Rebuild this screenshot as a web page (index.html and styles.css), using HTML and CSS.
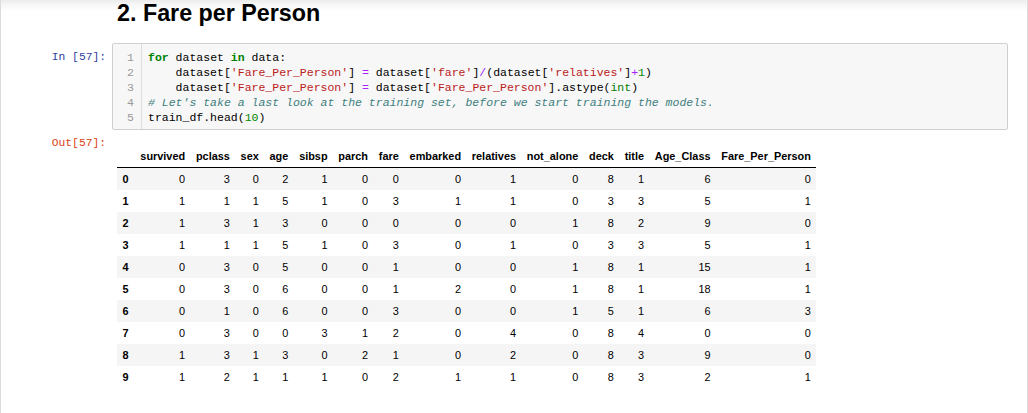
FILE: index.html
```html
<!DOCTYPE html>
<html>
<head>
<meta charset="utf-8">
<link rel="stylesheet" href="styles.css">
</head>
<body>
<div class="page">
  <div class="cell text-cell">
    <div class="prompt"></div>
    <div class="content"><h2 class="heading">2. Fare per Person</h2></div>
  </div>

  <div class="cell input-cell">
    <div class="prompt in-prompt">In [57]:</div>
    <div class="content">
      <div class="code-box">
        <div class="gutter">
          <div>1</div><div>2</div><div>3</div><div>4</div><div>5</div>
        </div>
        <div class="code">
          <div class="line"><span class="kw">for</span> dataset <span class="kw">in</span> data:</div>
          <div class="line">    dataset[<span class="str">'Fare_Per_Person'</span>] <span class="op">=</span> dataset[<span class="str">'fare'</span>]<span class="op">/</span>(dataset[<span class="str">'relatives'</span>]<span class="op">+</span><span class="num">1</span>)</div>
          <div class="line">    dataset[<span class="str">'Fare_Per_Person'</span>] <span class="op">=</span> dataset[<span class="str">'Fare_Per_Person'</span>].astype(<span class="bi">int</span>)</div>
          <div class="line"><span class="cm"># Let's take a last look at the training set, before we start training the models.</span></div>
          <div class="line">train_df.head(<span class="num">10</span>)</div>
        </div>
      </div>
    </div>
  </div>

  <div class="cell output-cell">
    <div class="prompt out-prompt">Out[57]:</div>
    <div class="content">
      <table class="df">
        <thead>
          <tr><th></th><th>survived</th><th>pclass</th><th>sex</th><th>age</th><th>sibsp</th><th>parch</th><th>fare</th><th>embarked</th><th>relatives</th><th>not_alone</th><th>deck</th><th>title</th><th>Age_Class</th><th>Fare_Per_Person</th></tr>
        </thead>
        <tbody>
          <tr><th>0</th><td>0</td><td>3</td><td>0</td><td>2</td><td>1</td><td>0</td><td>0</td><td>0</td><td>1</td><td>0</td><td>8</td><td>1</td><td>6</td><td>0</td></tr>
          <tr><th>1</th><td>1</td><td>1</td><td>1</td><td>5</td><td>1</td><td>0</td><td>3</td><td>1</td><td>1</td><td>0</td><td>3</td><td>3</td><td>5</td><td>1</td></tr>
          <tr><th>2</th><td>1</td><td>3</td><td>1</td><td>3</td><td>0</td><td>0</td><td>0</td><td>0</td><td>0</td><td>1</td><td>8</td><td>2</td><td>9</td><td>0</td></tr>
          <tr><th>3</th><td>1</td><td>1</td><td>1</td><td>5</td><td>1</td><td>0</td><td>3</td><td>0</td><td>1</td><td>0</td><td>3</td><td>3</td><td>5</td><td>1</td></tr>
          <tr><th>4</th><td>0</td><td>3</td><td>0</td><td>5</td><td>0</td><td>0</td><td>1</td><td>0</td><td>0</td><td>1</td><td>8</td><td>1</td><td>15</td><td>1</td></tr>
          <tr><th>5</th><td>0</td><td>3</td><td>0</td><td>6</td><td>0</td><td>0</td><td>1</td><td>2</td><td>0</td><td>1</td><td>8</td><td>1</td><td>18</td><td>1</td></tr>
          <tr><th>6</th><td>0</td><td>1</td><td>0</td><td>6</td><td>0</td><td>0</td><td>3</td><td>0</td><td>0</td><td>1</td><td>5</td><td>1</td><td>6</td><td>3</td></tr>
          <tr><th>7</th><td>0</td><td>3</td><td>0</td><td>0</td><td>3</td><td>1</td><td>2</td><td>0</td><td>4</td><td>0</td><td>8</td><td>4</td><td>0</td><td>0</td></tr>
          <tr><th>8</th><td>1</td><td>3</td><td>1</td><td>3</td><td>0</td><td>2</td><td>1</td><td>0</td><td>2</td><td>0</td><td>8</td><td>3</td><td>9</td><td>0</td></tr>
          <tr><th>9</th><td>1</td><td>2</td><td>1</td><td>1</td><td>1</td><td>0</td><td>2</td><td>1</td><td>1</td><td>0</td><td>8</td><td>3</td><td>2</td><td>1</td></tr>
        </tbody>
      </table>
    </div>
  </div>
</div>
</body>
</html>
```

FILE: styles.css
```css
html, body {
  margin: 0;
  padding: 0;
  background: #fff;
}

.page {
  width: 1028px;
  height: 413px;
  box-sizing: border-box;
  border-left: 1px solid #dcdcdc;
  border-right: 1px solid #dcdcdc;
  background: linear-gradient(to bottom, #ececec 0px, #f7f7f7 5px, #ffffff 11px);
  overflow: hidden;
  font-family: "Liberation Sans", Arial, sans-serif;
  color: #000;
}

.cell {
  display: flex;
}

.prompt {
  flex: none;
  width: 111px;
  box-sizing: border-box;
  padding-right: 6px;
  text-align: right;
  font-family: "Liberation Mono", "DejaVu Sans Mono", monospace;
  font-size: 11.3px;
  line-height: 15px;
  white-space: pre;
}

.content {
  flex: 1;
  min-width: 0;
  margin-right: 19px;
}

/* heading */
.heading {
  margin: 0;
  padding-left: 5px;
  font-size: 23.3px;
  line-height: 27px;
  font-weight: bold;
  color: #000;
}

/* input cell */
.input-cell {
  margin-top: 16px;
}

.in-prompt {
  color: #303f9f;
  padding-top: 7px;
}

.code-box {
  display: flex;
  background: #f7f7f7;
  border: 1px solid #cfcfcf;
  border-radius: 2px;
  font-family: "Liberation Mono", "DejaVu Sans Mono", monospace;
  font-size: 11.5px;
  line-height: 15px;
}

.gutter {
  flex: none;
  width: 29px;
  box-sizing: border-box;
  padding: 6px 7px 4px 0;
  border-right: 1px solid #dddddd;
  text-align: right;
  color: #999999;
}

.code {
  padding: 6px 0 4px 6px;
  color: #000;
}

.line {
  white-space: pre;
  height: 15px;
}

.kw { color: #008000; font-weight: bold; }
.str { color: #ba2121; }
.op { color: #aa22ff; }
.num { color: #008800; }
.bi { color: #008000; }
.cm { color: #408080; font-style: italic; }

/* output cell */
.out-prompt {
  color: #d84315;
  padding-top: 6px;
}

.df {
  margin-top: 15px;
  margin-left: 5px;
  border-collapse: collapse;
  border-spacing: 0;
  border: none;
  font-family: "Liberation Sans", Arial, sans-serif;
  font-size: 10.9px;
  color: #000;
}

.df thead {
  border-bottom: 1px solid #000;
}

.df th,
.df td {
  padding: 5.5px 5.4px;
  line-height: 11px;
  text-align: right;
  white-space: nowrap;
  vertical-align: middle;
}

.df th {
  font-weight: bold;
}

.df tbody th {
  padding-right: 6.5px;
}

.df tbody tr:nth-child(odd) {
  background: #f5f5f5;
}
```
